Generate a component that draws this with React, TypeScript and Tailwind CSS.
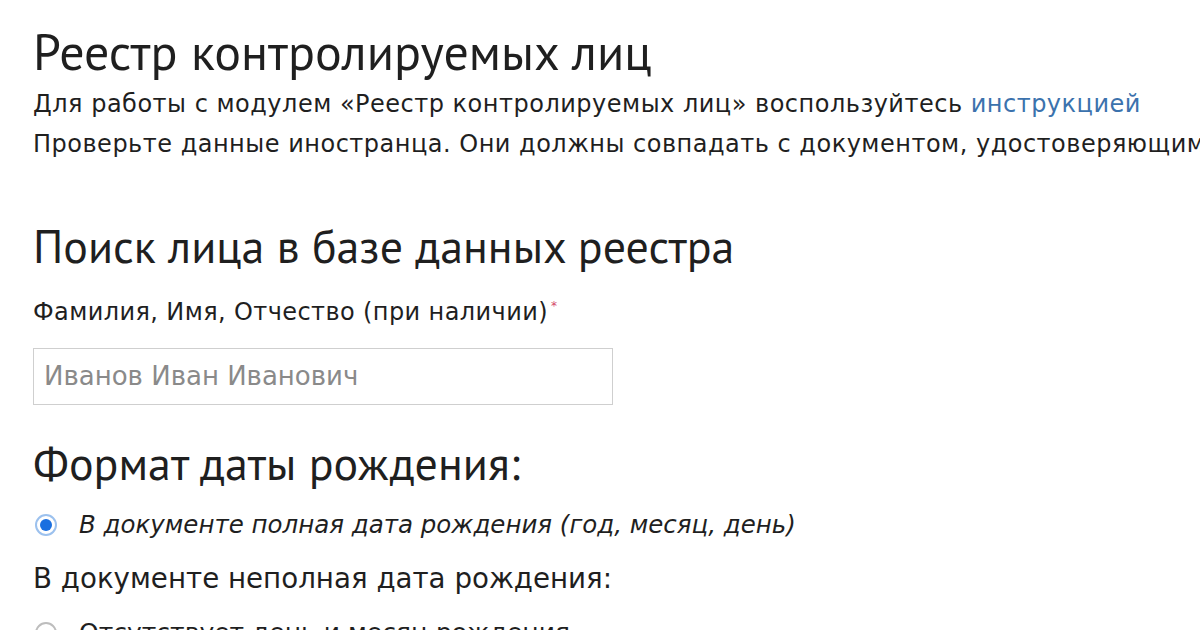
const body = "font-['DejaVu_Sans',sans-serif]";
const head = "font-['Liberation_Sans_Narrow','PT_Sans','Open_Sans',sans-serif]";

function Radio({ checked }: { checked?: boolean }) {
  return (
    <span
      className={`flex h-[22px] w-[22px] shrink-0 items-center justify-center rounded-full border-2 ${
        checked ? "border-[#9cc1ee] bg-white" : "border-[#bdbdbd] bg-white"
      }`}
    >
      {checked && <span className="h-[12px] w-[12px] rounded-full bg-[#1a6fe0]" />}
    </span>
  );
}

export default function App() {
  return (
    <main className={`${body} h-[630px] w-[1200px] overflow-hidden bg-white pl-[33px] pt-[24px] text-[#1f1f1f]`}>
      {/* header */}
      <h1 className={`${head} whitespace-nowrap text-[50px] leading-[56px]`}>Реестр контролируемых лиц</h1>
      <p className="mt-[4px] whitespace-nowrap text-[24px] leading-[40px] tracking-[0.5px]">
        Для работы с модулем «Реестр контролируемых лиц» воспользуйтесь{" "}
        <a className="text-[#3b72ad]">инструкцией</a>
      </p>
      <p className="whitespace-nowrap text-[24px] leading-[40px] tracking-[0.5px]">
        Проверьте данные иностранца. Они должны совпадать с документом, удостоверяющим личность
      </p>

      {/* search */}
      <h2 className={`${head} mt-[56px] whitespace-nowrap text-[46px] leading-[52px]`}>Поиск лица в базе данных реестра</h2>
      <label className="mt-[24px] block whitespace-nowrap text-[24px] leading-[32px] tracking-[0.4px]">
        Фамилия, Имя, Отчество (при наличии)
        <span className="relative -top-[10px] ml-[3px] text-[12px] text-[#d4496a]">*</span>
      </label>
      <div className="mt-[16px] flex h-[57px] w-[580px] items-center border border-[#cfcfcf] px-[10px]">
        <span className="text-[26px] text-[#8a8a8a]">Иванов Иван Иванович</span>
      </div>

      {/* birth date */}
      <h2 className={`${head} mt-[32px] whitespace-nowrap text-[46px] leading-[52px]`}>Формат даты рождения:</h2>
      <div className="mt-[16px] flex items-center gap-[22px] pl-[2px]">
        <Radio checked />
        <span className="whitespace-nowrap text-[24.5px] italic leading-[40px]">
          В документе полная дата рождения (год, месяц, день)
        </span>
      </div>
      <p className="mt-[14px] whitespace-nowrap text-[27.7px] leading-[40px]">В документе неполная дата рождения:</p>
      <div className="mt-[14px] flex items-center gap-[22px] pl-[2px]">
        <Radio />
        <span className="whitespace-nowrap text-[25px] leading-[40px]">Отсутствует день и месяц рождения</span>
      </div>
    </main>
  );
}
